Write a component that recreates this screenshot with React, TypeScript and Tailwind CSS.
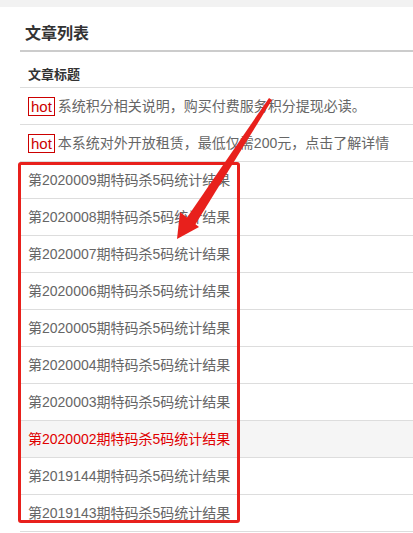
import React from 'react';

const rows = [
    '第2020009期特码杀5码统计结果',
    '第2020008期特码杀5码统计结果',
    '第2020007期特码杀5码统计结果',
    '第2020006期特码杀5码统计结果',
    '第2020005期特码杀5码统计结果',
    '第2020004期特码杀5码统计结果',
    '第2020003期特码杀5码统计结果',
    '第2020002期特码杀5码统计结果',
    '第2019144期特码杀5码统计结果',
    '第2019143期特码杀5码统计结果',
];

const hotRows = [
    '系统积分相关说明，购买付费服务积分提现必读。',
    '本系统对外开放租赁，最低仅需200元，点击了解详情',
];

function HotTag() {
    return (
        <span className="inline-block border border-[#c00] text-[#c00] text-[15px] px-[2px] leading-[17px] mr-[3px]">
            hot
        </span>
    );
}

export default function App() {
    return (
        <div
            className="relative w-[413px] h-[533px] overflow-hidden bg-white"
            style={{ fontFamily: '"Liberation Sans", "Noto Sans CJK SC", sans-serif' }}
        >
            <div className="h-[7px] bg-[#f2f2f2]" />
            <div className="pl-5">
                <div className="h-[45px] border-b-2 border-[#cccccc] pl-[5px] pt-[17px] text-[16px] font-bold text-[#333] leading-5">
                    文章列表
                </div>
                <div className="h-[36px] border-b border-[#dddddd] pl-2 pt-[15px] text-[13px] font-bold text-[#333] leading-4">
                    文章标题
                </div>
                {hotRows.map((t) => (
                    <div key={t} className="h-[37px] border-b border-[#dddddd] pl-2 flex items-center text-[14px] text-[#666] whitespace-nowrap">
                        <HotTag />
                        {t}
                    </div>
                ))}
                {rows.map((t) => {
                    const active = t.includes('2020002');
                    return (
                        <div
                            key={t}
                            className={
                                active
                                    ? 'h-[37px] border-b border-[#dddddd] pl-2 flex items-center text-[14px] text-[#e00000] bg-[#f5f5f5] whitespace-nowrap'
                                    : 'h-[37px] border-b border-[#dddddd] pl-2 flex items-center text-[14px] text-[#666] whitespace-nowrap'
                            }
                        >
                            {t}
                        </div>
                    );
                })}
            </div>

            {/* annotation box */}
            <div className="absolute left-[18px] top-[162px] w-[222px] h-[361px] border-[3px] border-[#e8201c] rounded-[3px]" />

            {/* annotation arrow */}
            <svg className="absolute left-0 top-0" width="413" height="533" viewBox="0 0 413 533">
                <polygon points="269,98 272,100 195,225 186,219" fill="#e8201c" />
                <polygon points="177,239 180,212 199,227" fill="#e8201c" />
            </svg>
        </div>
    );
}
